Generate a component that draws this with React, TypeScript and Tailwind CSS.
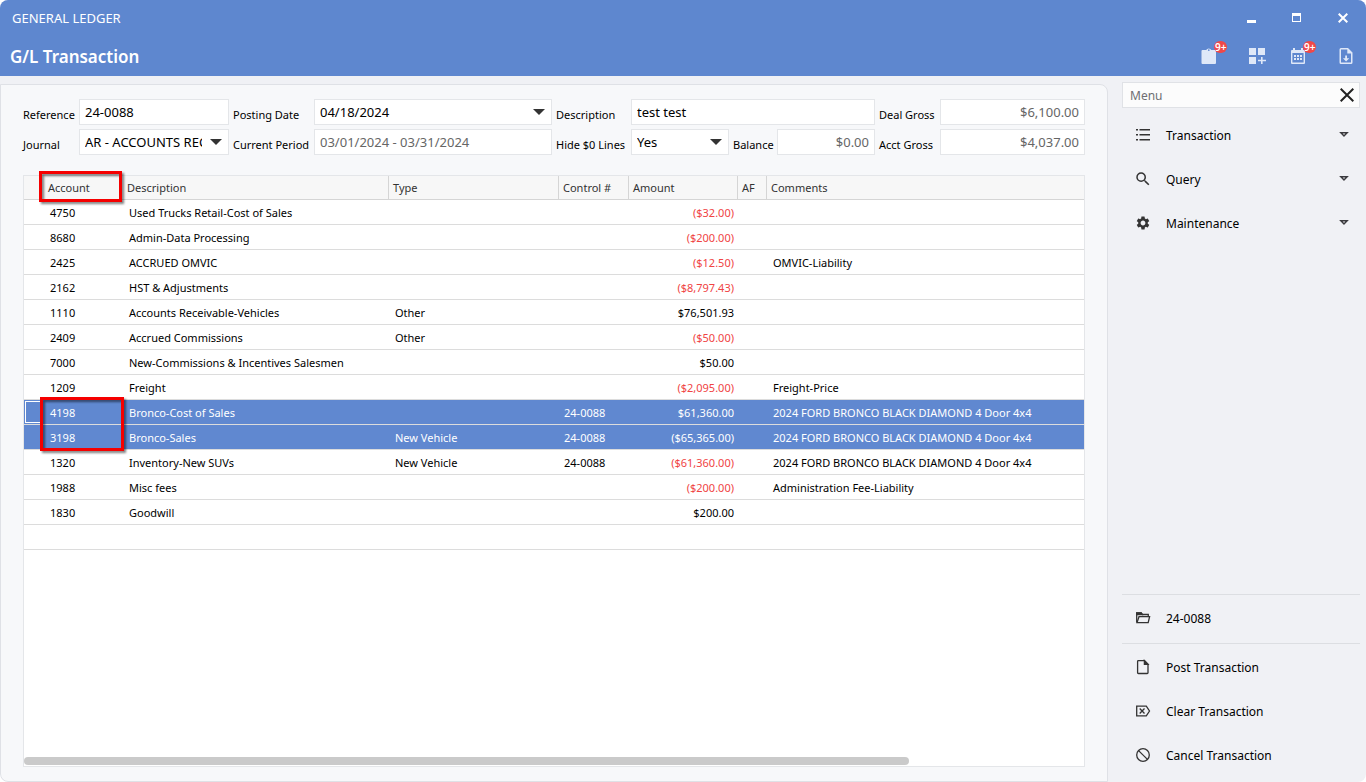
import React from "react";
import clsx from "clsx";
import { MdSearch, MdSettings } from "react-icons/md";

interface LedgerRow {
	account: string;
	description: string;
	type?: string;
	control?: string;
	amount: string;
	comments?: string;
	selected?: boolean;
}

const rows: LedgerRow[] = [
	{ account: "4750", description: "Used Trucks Retail-Cost of Sales", amount: "($32.00)" },
	{ account: "8680", description: "Admin-Data Processing", amount: "($200.00)" },
	{ account: "2425", description: "ACCRUED OMVIC", amount: "($12.50)", comments: "OMVIC-Liability" },
	{ account: "2162", description: "HST & Adjustments", amount: "($8,797.43)" },
	{ account: "1110", description: "Accounts Receivable-Vehicles", type: "Other", amount: "$76,501.93" },
	{ account: "2409", description: "Accrued Commissions", type: "Other", amount: "($50.00)" },
	{ account: "7000", description: "New-Commissions & Incentives Salesmen", amount: "$50.00" },
	{ account: "1209", description: "Freight", amount: "($2,095.00)", comments: "Freight-Price" },
	{
		account: "4198",
		description: "Bronco-Cost of Sales",
		control: "24-0088",
		amount: "$61,360.00",
		comments: "2024 FORD BRONCO BLACK DIAMOND 4 Door 4x4",
		selected: true,
	},
	{
		account: "3198",
		description: "Bronco-Sales",
		type: "New Vehicle",
		control: "24-0088",
		amount: "($65,365.00)",
		comments: "2024 FORD BRONCO BLACK DIAMOND 4 Door 4x4",
		selected: true,
	},
	{
		account: "1320",
		description: "Inventory-New SUVs",
		type: "New Vehicle",
		control: "24-0088",
		amount: "($61,360.00)",
		comments: "2024 FORD BRONCO BLACK DIAMOND 4 Door 4x4",
	},
	{ account: "1988", description: "Misc fees", amount: "($200.00)", comments: "Administration Fee-Liability" },
	{ account: "1830", description: "Goodwill", amount: "$200.00" },
];

/* Icons */

const ClipboardIcon = () => (
	<svg width="16" height="18" viewBox="0 0 16 18" fill="currentColor">
		<path
			fillRule="evenodd"
			d="M1.500 3h3.700a2.900 2.900 0 0 1 5.100 0H14a1 1 0 0 1 1 1v12a1 1 0 0 1-1 1H1.500a1 1 0 0 1-1-1V4a1 1 0 0 1 1-1zm6.300-.8a.9.9 0 1 0 0 1.800.9.9 0 0 0 0-1.800z"
		/>
	</svg>
);

const TilesIcon = () => (
	<svg width="17" height="18" viewBox="0 0 17 18" fill="currentColor">
		<path d="M0 1h7v7H0zM9 1h7v7H9zM0 10h7v7H0zM12 10h1.600v2.700H17v1.600h-3.400V17H12v-2.700H9v-1.600h3z" />
	</svg>
);

const CalendarIcon = () => (
	<svg width="16" height="18" viewBox="0 0 16 18" fill="currentColor">
		<path
			fillRule="evenodd"
			d="M3 1h2v2h6V1h2v2h1a1 1 0 0 1 1 1v12a1 1 0 0 1-1 1H2a1 1 0 0 1-1-1V4a1 1 0 0 1 1-1h1zM2.400 6v9.600h11.200V6z"
		/>
		<path d="M4 8h2v2H4zM7 8h2v2H7zM10 8h2v2h-2zM4 11h2v2H4zM7 11h2v2H7zM10 11h2v2h-2z" />
	</svg>
);

const DownloadFileIcon = () => (
	<svg width="16" height="18" viewBox="0 0 16 18" fill="currentColor">
		<path
			fillRule="evenodd"
			d="M3 1h7l4.500 4.500V15.500A1.500 1.500 0 0 1 13 17H3a1.500 1.500 0 0 1-1.500-1.500v-13A1.500 1.500 0 0 1 3 1zm0 1.500v13h10V6.500H9.300v-4z"
		/>
		<path d="M7.200 8.500h1.800v2.700h2.300L8.100 14.500 4.900 11.200h2.300z" />
	</svg>
);

const ListIcon = () => (
	<svg width="16" height="16" viewBox="0 0 16 16" fill="currentColor">
		<path d="M1 2h2v1.500H1zM4.500 2H15v1.500H4.500zM1 7h2v1.500H1zM4.500 7H15v1.500H4.500zM1 12h2v1.500H1zM4.500 12H15v1.500H4.500z" />
	</svg>
);

const FolderIcon = () => (
	<svg width="16" height="16" viewBox="0 0 16 16" fill="none" stroke="currentColor" strokeWidth="1.300">
		<path d="M1.700 12.500V3h4.500l1.300 1.500h5.800V6" />
		<path d="M1.700 3h4.500l1 1.500H1.700z" fill="currentColor" />
		<path d="M2 12.600 4 6.700h10.600l-1.400 5.900z" />
	</svg>
);

const FileIcon = () => (
	<svg width="16" height="16" viewBox="0 0 16 16" fill="none" stroke="currentColor" strokeWidth="1.300">
		<path d="M3.400 1.600h6L13 5.200v8.500a.8.8 0 0 1-.8.8H3.400a.8.8 0 0 1-.8-.8V2.400a.8.8 0 0 1 .8-.8z" />
		<path d="M9.400 1.600V5.400H13z" fill="currentColor" />
	</svg>
);

const ClearIcon = () => (
	<svg width="16" height="16" viewBox="0 0 16 16" fill="none" stroke="currentColor" strokeWidth="1.300">
		<path d="M1.700 3.200h9.600L14.500 8l-3.200 4.800H1.700zM4.700 5.500l4.800 5M9.500 5.500l-4.800 5" />
	</svg>
);

const CancelIcon = () => (
	<svg width="16" height="16" viewBox="0 0 16 16" fill="none" stroke="currentColor" strokeWidth="1.300">
		<circle cx="8" cy="8" r="6.300" />
		<path d="M3.600 3.600l8.800 8.800" />
	</svg>
);

const Caret = () => (
	<svg width="10" height="8" viewBox="0 0 10 8" fill="none" stroke="#3a3a3e" strokeWidth="1.500">
		<path d="M1.900 1.700h6.200L5 4.900z" />
	</svg>
);

/* Form */

interface FieldProps {
	id: string;
	label: string;
	value: string;
	muted?: boolean;
	right?: boolean;
}

const boxStyle = "block h-[26px] w-full min-w-0 border border-[#e4e6e9] bg-white text-[13px] outline-none";

const FieldLabel = ({ id, label }: { id: string; label: string }) => (
	<label htmlFor={id} className="whitespace-nowrap pt-[6px] text-[11px]">
		{label}
	</label>
);

const Field: React.FC<FieldProps> = ({ id, label, value, muted, right }) => (
	<>
		<FieldLabel id={id} label={label} />
		<input
			id={id}
			defaultValue={value}
			readOnly={muted}
			className={clsx(boxStyle, "px-[5px]", muted && "text-[#666]", right && "text-right")}
		/>
	</>
);

const Select = ({ id, value }: { id: string; value: string }) => (
	<div className="relative min-w-0">
		<select id={id} className={clsx(boxStyle, "appearance-none pl-[5px] pr-[26px] pt-px")}>
			<option>{value}</option>
		</select>
		<svg
			className="pointer-events-none absolute right-[7px] top-[10px]"
			width="12"
			height="6"
			viewBox="0 0 12 6"
			fill="#333">
			<path d="M0 0h12L6 6z" />
		</svg>
	</div>
);

const SelectField: React.FC<FieldProps> = ({ id, label, value }) => (
	<>
		<FieldLabel id={id} label={label} />
		<Select id={id} value={value} />
	</>
);

/* Header */

const Badge = () => (
	<span className="absolute -top-[6px] left-[13px] flex h-3 items-center rounded-full bg-[#f04848] px-px text-[10px] font-semibold text-white">
		9+
	</span>
);

const Header = () => (
	<header className="shrink-0 bg-[#5e87cf] text-white">
		<div className="flex h-9 items-center justify-between">
			<span className="pl-3 pt-[2px] text-[13px]">GENERAL LEDGER</span>
			<div className="flex h-full">
				<button aria-label="Minimize" className="flex w-[46px] items-center justify-center">
					<svg width="10" height="10" viewBox="0 0 10 10" fill="currentColor">
						<path d="M1 7h9v3H1z" />
					</svg>
				</button>
				<button aria-label="Maximize" className="flex w-[46px] items-center justify-center">
					<svg width="10" height="10" viewBox="0 0 10 10" fill="currentColor">
						<path fillRule="evenodd" d="M0 0h9v9H0zM1 3v5h7V3z" />
					</svg>
				</button>
				<button aria-label="Close" className="flex w-[46px] items-center justify-center">
					<svg width="10" height="10" viewBox="0 0 10 10" stroke="currentColor" strokeWidth="2">
						<path d="M.7.7l8.600 8.600M9.300.7L.7 9.300" />
					</svg>
				</button>
			</div>
		</div>
		<div className="flex h-10 items-center justify-between pr-3">
			<h1 className="pl-[10px] pt-px text-[17px] font-semibold">G/L Transaction</h1>
			<div className="flex text-[#dfe8f8]">
				<button aria-label="Tasks" className="relative">
					<ClipboardIcon />
					<Badge />
				</button>
				<button aria-label="Add tile" className="ml-8">
					<TilesIcon />
				</button>
				<button aria-label="Calendar" className="relative ml-6">
					<CalendarIcon />
					<Badge />
				</button>
				<button aria-label="Download" className="ml-8">
					<DownloadFileIcon />
				</button>
			</div>
		</div>
	</header>
);

/* Table */

const headCell = "border-b border-[#d5d5d5] pt-[2px] text-left font-normal text-[#333]";

const LedgerTable = () => (
	<div className="relative flex min-h-0 flex-1 flex-col justify-between border border-[#e4e6e9] bg-white">
		<table className="w-full table-fixed border-separate border-spacing-0 text-[11px]">
			<colgroup>
				<col className="w-4" />
				<col className="w-[82px]" />
				<col className="w-[267px]" />
				<col className="w-[170px]" />
				<col className="w-[70px]" />
				<col className="w-[109px]" />
				<col className="w-[29px]" />
				<col />
			</colgroup>
			<thead>
				<tr className="h-6 bg-[#f7f7f7]">
					<td className={headCell} />
					<th className={clsx(headCell, "pl-2")}>Account</th>
					<th className={clsx(headCell, "border-r pl-[5px]")}>Description</th>
					<th className={clsx(headCell, "border-r pl-1")}>Type</th>
					<th className={clsx(headCell, "border-r pl-1")}>Control #</th>
					<th className={clsx(headCell, "border-r pl-1")}>Amount</th>
					<th className={clsx(headCell, "border-r pl-1")}>AF</th>
					<th className={clsx(headCell, "pl-1")}>Comments</th>
				</tr>
			</thead>
			<tbody className="[&_td]:whitespace-nowrap [&_td]:border-b [&_td]:border-[#dcdcdc] [&_td:not(:first-child)]:pt-[2px]">
				{rows.map((row, index) => (
					<tr
						key={row.account}
						className={clsx("h-[25px]", row.selected && "bg-[#6088d0] text-white")}>
						<td>
							{index === 8 && <div className="ml-px h-[22px] border border-r-0 border-white" />}
						</td>
						<td className="pl-[10px]">{row.account}</td>
						<td className="pl-[7px]">{row.description}</td>
						<td className="pl-[6px]">{row.type}</td>
						<td className="pl-[5px]">{row.control}</td>
						<td
							className={clsx(
								"pr-1 text-right",
								row.amount.startsWith("(") && !row.selected && "text-[#f04444]",
							)}>
							{row.amount}
						</td>
						<td />
						<td className="pl-[6px]">{row.comments}</td>
					</tr>
				))}
				<tr className="h-[25px]">
					<td colSpan={8} />
				</tr>
			</tbody>
		</table>

		<div className="mb-px h-2 w-[83.5%] rounded-full bg-[#cacaca]" />

		{/* Highlight boxes */}
		<div className="pointer-events-none absolute -top-[5px] left-[15px] h-[31px] w-[83px] border-[3px] border-[#f50000] drop-shadow-[2px_2px_1px_rgba(0,0,0,0.5)]" />
		<div className="pointer-events-none absolute left-4 top-[221px] h-[54px] w-[84px] border-[3px] border-[#f50000] drop-shadow-[2px_2px_1px_rgba(0,0,0,0.5)]" />
	</div>
);

/* Side menu */

interface MenuItemProps {
	icon: React.ReactNode;
	label: string;
	expandable?: boolean;
}

const MenuItem: React.FC<MenuItemProps> = ({ icon, label, expandable }) => (
	<button className="flex h-11 w-full items-center pl-[13px] pr-[11px] text-left text-xs">
		<span className="text-[#333] [&>svg]:block">{icon}</span>
		<span className="flex-1 pl-[15px] pt-px">{label}</span>
		{expandable && <Caret />}
	</button>
);

const SideMenu = () => (
	<aside className="flex w-[238px] shrink-0 flex-col pb-[5px]">
		<div className="mb-[5px] mt-[6px] flex h-[26px] items-center border border-[#e0e2e6] bg-[#fcfcfc] pr-[5px]">
			<input
				aria-label="Menu"
				placeholder="Menu"
				className="min-w-0 flex-1 bg-transparent pl-[7px] pt-px text-xs outline-none placeholder:text-[#6e6e72]"
			/>
			<button aria-label="Close menu">
				<svg width="14" height="14" viewBox="0 0 14 14" stroke="#222" strokeWidth="2">
					<path d="M.7.7l12.600 12.600M13.300.7L.7 13.300" />
				</svg>
			</button>
		</div>
		<nav className="flex-1">
			<MenuItem icon={<ListIcon />} label="Transaction" expandable />
			<MenuItem icon={<MdSearch size={18} className="-mx-px" />} label="Query" expandable />
			<MenuItem icon={<MdSettings size={16} />} label="Maintenance" expandable />
		</nav>
		<div className="border-y border-[#dcdee2] pb-[3px] pt-px">
			<MenuItem icon={<FolderIcon />} label="24-0088" />
		</div>
		<div className="pt-px">
			<MenuItem icon={<FileIcon />} label="Post Transaction" />
			<MenuItem icon={<ClearIcon />} label="Clear Transaction" />
			<MenuItem icon={<CancelIcon />} label="Cancel Transaction" />
		</div>
	</aside>
);

const App = () => (
	<div className="flex h-screen flex-col overflow-hidden rounded-lg bg-[#f0f1f5] font-['Noto_Sans','Open_Sans',sans-serif] text-black">
		<Header />
		<div className="flex min-h-0 flex-1 gap-[14px] pr-[6px]">
			<main className="mt-2 flex min-w-0 flex-1 flex-col rounded-bl-lg rounded-tr-lg border border-[#dfe1e6] bg-[#f7f8fa] px-[22px] py-[14px]">
				<form className="mb-5 grid grid-cols-[56px_150fr_85px_238fr_79px_244fr_65px_145fr] items-center gap-y-1 [&>label:nth-of-type(4n+1)]:pl-0 [&>label]:pl-1">
					<Field id="reference" label="Reference" value="24-0088" />
					<SelectField id="posting-date" label="Posting Date" value="04/18/2024" />
					<Field id="description" label="Description" value="test test" />
					<Field id="deal-gross" label="Deal Gross" value="$6,100.00" muted right />
					<SelectField id="journal" label="Journal" value="AR - ACCOUNTS RECEIVABLE" />
					<Field id="period" label="Current Period" value="03/01/2024 - 03/31/2024" muted />
					<FieldLabel id="hide-lines" label="Hide $0 Lines" />
					<div className="grid grid-cols-[98fr_48px_98fr] items-center [&>label]:pl-1">
						<Select id="hide-lines" value="Yes" />
						<Field id="balance" label="Balance" value="$0.00" muted right />
					</div>
					<Field id="acct-gross" label="Acct Gross" value="$4,037.00" muted right />
				</form>
				<LedgerTable />
			</main>
			<SideMenu />
		</div>
	</div>
);

export default App;
